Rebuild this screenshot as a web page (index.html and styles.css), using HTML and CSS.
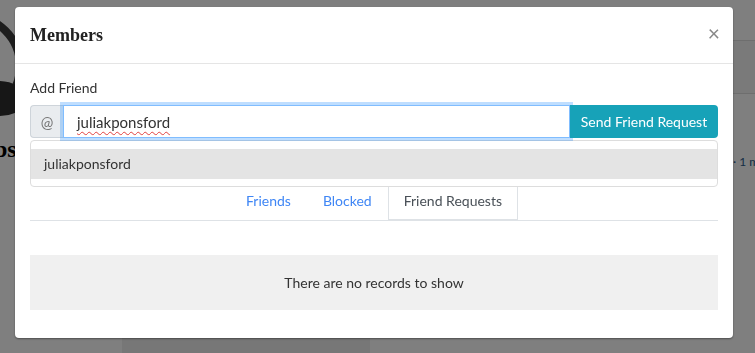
FILE: index.html
```html
<!DOCTYPE html>
<html lang="en">
<head>
    <meta charset="UTF-8">
    <meta name="viewport" content="width=device-width, initial-scale=1.0">
    <title>Members</title>
    <link rel="stylesheet" href="styles.css">
</head>
<body>
    <!-- page behind the modal -->
    <div class="page">
        <div class="page-left">
            <svg class="eye" width="60" height="130" viewBox="0 0 60 130">
                <circle cx="-30" cy="66" r="50" fill="none" stroke="#3a3a3a" stroke-width="8"/>
                <path d="M-40 100 Q 0 62 36 100 Q 0 132 -40 100 Z" fill="#2e2e2e"/>
            </svg>
            <div class="page-title">bs</div>
        </div>
        <div class="page-right">
            <div class="page-bar"></div>
            <div class="page-meta">· 1 m</div>
        </div>
        <div class="page-bottom"></div>
    </div>

    <div class="overlay">
        <div class="modal">
            <div class="modal-header">
                <h5 class="modal-title">Members</h5>
                <span class="close">&times;</span>
            </div>
            <div class="modal-body">
                <label class="label">Add Friend</label>
                <div class="input-group">
                    <span class="addon">@</span>
                    <div class="input">
                        <span class="typed">juliakponsford</span>
                    </div>
                    <button class="btn-send">Send Friend Request</button>
                </div>
                <div class="dropdown">
                    <div class="dropdown-item">juliakponsford</div>
                </div>
                <ul class="tabs">
                    <li class="tab"><a href="#">Friends</a></li>
                    <li class="tab"><a href="#">Blocked</a></li>
                    <li class="tab active"><a href="#">Friend Requests</a></li>
                </ul>
                <div class="empty">There are no records to show</div>
            </div>
        </div>
    </div>
</body>
</html>
```

FILE: styles.css
```css
body {
    margin: 0;
    font-family: Lato, "Open Sans", sans-serif;
    font-size: 14px;
    color: #333;
    overflow: hidden;
}

/* background page */
.page {
    height: 353px;
    display: grid;
    grid-template-columns: 122px 248px 1fr;
    grid-template-rows: 338px 1fr;
    background: #fff;
}

.page-left {
    grid-row: 1;
    grid-column: 1;
    overflow: hidden;
}

.eye {
    display: block;
}

.page-title {
    margin-top: 6px;
    margin-left: -6px;
    font-family: "Liberation Serif", serif;
    font-size: 24px;
    font-weight: bold;
    color: #000;
}

.page-right {
    grid-row: 1;
    grid-column: 3;
    display: flex;
    flex-direction: column;
    align-items: flex-end;
}

.page-bar {
    margin-top: 40px;
    width: 100px;
    height: 52px;
    background: #f4f4f4;
    border-top: 1px solid #dcdcdc;
    border-bottom: 1px solid #dcdcdc;
}

.page-meta {
    margin-top: 60px;
    width: 22px;
    font-size: 12px;
    color: #2a5a8a;
    white-space: nowrap;
}

.page-bottom {
    grid-row: 2;
    grid-column: 2;
    background: #efefef;
}

/* overlay + modal */
.overlay {
    position: fixed;
    inset: 0;
    background: rgba(0, 0, 0, 0.5);
}

.modal {
    margin: 7px 0 0 15px;
    width: 718px;
    height: 331px;
    background: #fff;
    border-radius: 4px;
    box-shadow: 0 1px 2px rgba(0, 0, 0, 0.4);
    box-sizing: border-box;
}

.modal-header {
    display: flex;
    justify-content: space-between;
    align-items: center;
    height: 56px;
    padding: 0 15px;
    border-bottom: 1px solid #e5e5e5;
}

.modal-title {
    margin: 0;
    font-family: "Liberation Serif", serif;
    font-size: 18px;
    font-weight: bold;
    color: #222;
}

.close {
    font-size: 21px;
    color: #888;
    margin-top: -6px;
    margin-right: -2px;
}

.modal-body {
    padding: 14px 15px 15px;
}

.label {
    display: block;
    line-height: 20px;
    margin-bottom: 7px;
    color: #333;
}

.input-group {
    display: flex;
    height: 33px;
}

.addon {
    width: 32px;
    display: flex;
    align-items: center;
    justify-content: center;
    background: #e9ecef;
    border: 1px solid #ced4da;
    border-right: none;
    border-radius: 4px 0 0 4px;
    color: #777;
    font-size: 15px;
}

.input {
    flex: 1;
    display: flex;
    align-items: center;
    padding: 0 13px;
    border: 1px solid #80bdff;
    box-shadow: 0 0 0 3px rgba(0, 123, 255, 0.25);
    font-size: 15px;
    color: #333;
    background: #fff;
}

/* spellcheck squiggle */
.typed {
    text-decoration: underline wavy #e04040;
    text-decoration-thickness: 1px;
    text-underline-offset: 3px;
}

.btn-send {
    width: 148px;
    border: none;
    border-radius: 0 4px 4px 0;
    background: #17a2b8;
    color: #fff;
    font-family: inherit;
    font-size: 14px;
    padding: 0;
}

.dropdown {
    margin-top: 2px;
    padding: 8px 0 7px;
    border: 1px solid #ddd;
    border-radius: 4px;
}

.dropdown-item {
    padding: 0 13px;
    height: 30px;
    line-height: 30px;
    background: #e4e4e4;
    color: #333;
}

.tabs {
    list-style: none;
    margin: 0;
    padding: 0;
    display: flex;
    justify-content: center;
    border-bottom: 1px solid #dee2e6;
}

.tab a {
    display: block;
    padding: 0 15px;
    height: 32px;
    line-height: 28px;
    color: #3f86f5;
    text-decoration: none;
    border: 1px solid transparent;
    border-top: none;
}

.tab.active a {
    color: #495057;
    border-color: #dee2e6;
}

.empty {
    margin-top: 34px;
    height: 55px;
    line-height: 55px;
    background: #f0f0f0;
    text-align: center;
    color: #333;
}
```
